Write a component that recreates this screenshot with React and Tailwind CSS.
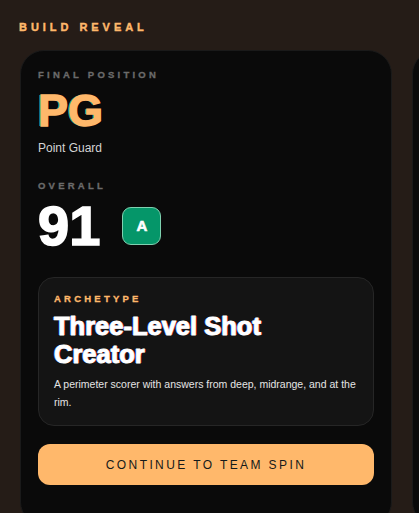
import React from 'react';

const heavy = { fontFamily: '"Liberation Sans", Arial, sans-serif' };

const RevealCard = () => (
    <div className="w-[372px] shrink-0 rounded-[24px] border border-[#1a1a1a] bg-[#0a0a0a] px-[17px] pt-[17px] pb-10">
        <p className="text-[9.5px] font-black uppercase tracking-[0.34em] text-[#6b6b6b] [-webkit-text-stroke:0.3px_#6b6b6b]">Final Position</p>
        <h1 className="mt-[6px] text-[45px] font-black leading-none text-[#ffb86b] [-webkit-text-stroke:1.4px_#ffb86b] [text-shadow:-1.5px_0_#14b8a6]">
            PG
        </h1>
        <p className="mt-[6px] text-[12px] text-[#d4d4d4]">Point Guard</p>

        <p className="mt-[22px] text-[9.5px] font-black uppercase tracking-[0.34em] text-[#6b6b6b] [-webkit-text-stroke:0.3px_#6b6b6b]">Overall</p>
        <div className="mt-[5px] flex items-center gap-[22px]">
            <span className="text-[56px] font-black leading-none text-white [-webkit-text-stroke:1.6px_white]">91</span>
            <span className="flex h-[38px] w-[39px] items-center justify-center rounded-[9px] border border-[#7fd1b0] bg-[#059669] text-[15px] font-black text-white [-webkit-text-stroke:0.6px_white]">
                A
            </span>
        </div>

        <div className="mt-[23px] rounded-[16px] border border-[#262626] bg-[#141414] px-[15px] pt-[14px] pb-[14px]">
            <p className="text-[9.5px] font-black uppercase tracking-[0.34em] text-[#ffb86b] [-webkit-text-stroke:0.3px_#ffb86b]">Archetype</p>
            <h2 className="mt-[6px] max-w-[260px] text-[25.5px] font-black leading-[28px] text-white [-webkit-text-stroke:0.9px_white] [text-shadow:-1px_0_#3b82f6,1px_0_#ef4444]">
                Three-Level Shot Creator
            </h2>
            <p className="mt-[7px] text-[10.5px] leading-[18px] text-[#e5e5e5]">
                A perimeter scorer with answers from deep, midrange, and at the rim.
            </p>
        </div>

        <button className="mt-[18px] flex h-[41px] w-full items-center justify-center rounded-[12px] bg-[#ffb86b] text-[12px] uppercase tracking-[0.2em] text-[#151a1a]">
            Continue to Team Spin
        </button>
    </div>
);

export default function App() {
    return (
        <div style={heavy} className="h-[513px] w-[419px] overflow-hidden bg-[#251c17] pl-5 pt-[19px]">
            <p className="ml-[-1px] text-[11px] font-black uppercase tracking-[0.36em] text-[#ffb86b] [-webkit-text-stroke:0.4px_#ffb86b]">
                Build Reveal
            </p>
            <div className="mt-[14px] flex gap-5">
                <RevealCard />
                <RevealCard />
            </div>
        </div>
    );
}
